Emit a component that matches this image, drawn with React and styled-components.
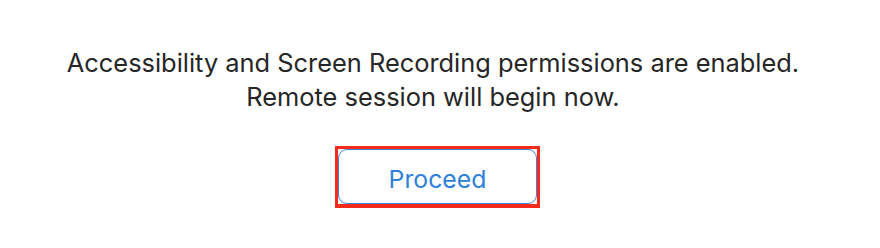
import React from "react";
import styled, { createGlobalStyle } from "styled-components";

const Global = createGlobalStyle`
  html, body { margin: 0; padding: 0; background: #ffffff; }
  body { font-family: Inter, "Noto Sans", sans-serif; -webkit-font-smoothing: antialiased; }
`;

const Page = styled.div`
  width: 880px;
  height: 248px;
  box-sizing: border-box;
  padding: 46px 5px 0 0;
  display: flex;
  flex-direction: column;
  align-items: center;
`;

const Message = styled.p`
  margin: 0;
  padding-right: 9px;
  text-align: center;
  font-size: 25.4px;
  line-height: 34px;
  color: #262626;
  letter-spacing: 0;
  white-space: nowrap;
`;

const Highlight = styled.div`
  margin-top: 32px;
  border: 3px solid #f42a1d;
  border-bottom-width: 4px;
  display: flex;
`;

const Button = styled.button`
  width: 199px;
  height: 55px;
  box-sizing: border-box;
  background: #ffffff;
  border: 1px solid #3a86dc;
  border-radius: 9px;
  color: #2f80d8;
  font-family: Inter, "Noto Sans", sans-serif;
  font-size: 24.8px;
  padding: 4px 0 0;
  cursor: pointer;
`;

export default function App() {
  return (
    <>
      <Global />
      <Page>
        <Message>
          Accessibility and Screen Recording permissions are enabled.
          <br />
          Remote session will begin now.
        </Message>
        <Highlight>
          <Button>Proceed</Button>
        </Highlight>
      </Page>
    </>
  );
}
